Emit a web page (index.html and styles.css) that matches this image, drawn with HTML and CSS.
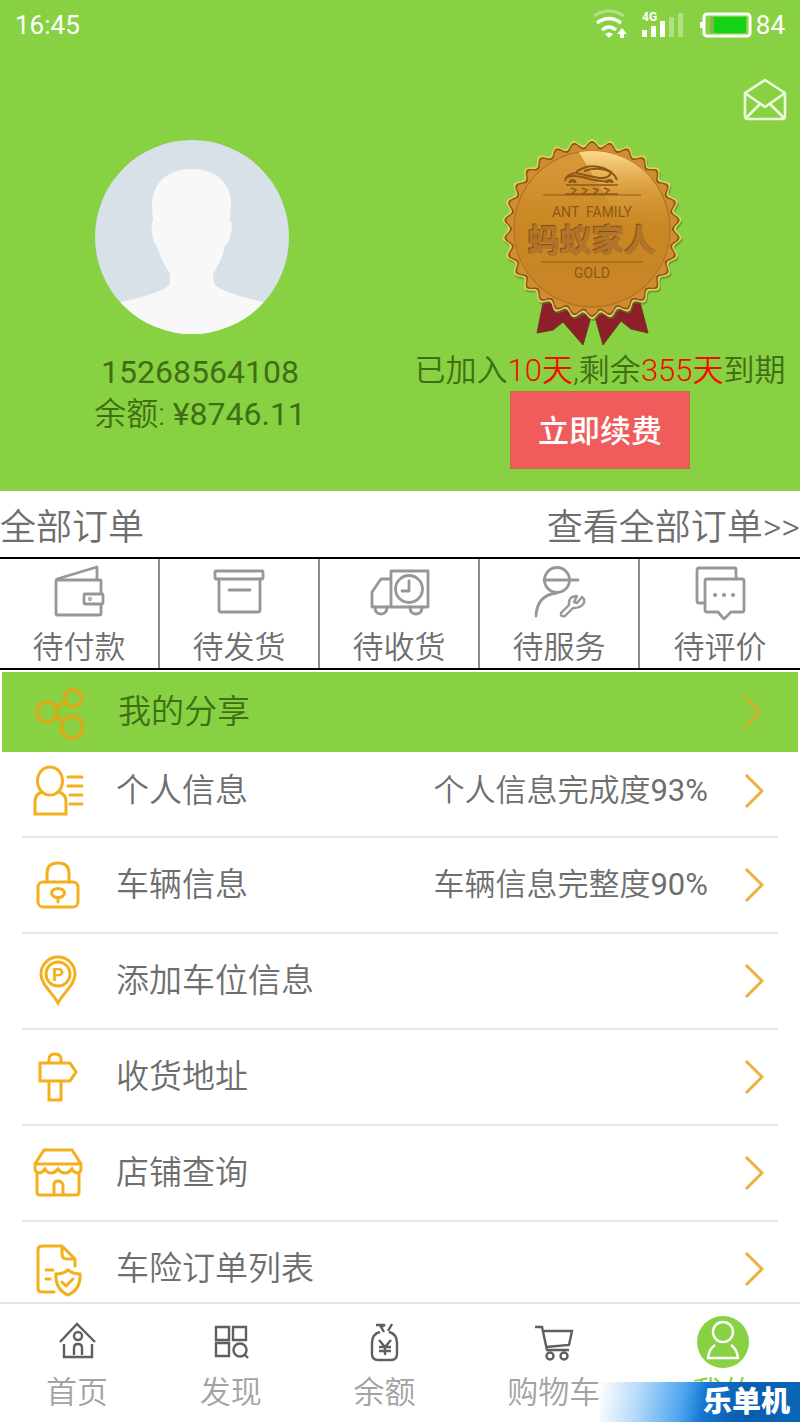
FILE: index.html
```html
<!DOCTYPE html>
<html lang="zh-CN">
<head>
<meta charset="utf-8">
<meta name="viewport" content="width=device-width, initial-scale=1">
<title>我的</title>
<link rel="stylesheet" href="styles.css">
</head>
<body>
<main class="content">
  <header class="profile">
    <div class="status">
      <span>16:45</span>
      <div class="status-right">
        <svg class="wifi" viewBox="0 0 36 32" fill="none" stroke="#fff" stroke-width="3">
          <path d="M3 7Q18-3 33 7" opacity=".35"/>
          <path d="M6 14Q18 5 30 14M11 21Q18 15 25 21" stroke-width="3.500"/>
          <path d="M14 25Q18 22 22 25L18 29Z" fill="#fff" stroke="none"/>
          <path d="M31 19l5 6h-3v4h-4v-4h-3z" fill="#fff" stroke="none"/>
        </svg>
        <svg class="signal" viewBox="0 0 42 32" fill="#fff">
          <text x="0" y="12" class="signal-type">4G</text>
          <path d="M0 21h5v7H0zM9 17h5v11H9zM18 12h5v16h-5z"/>
          <path d="M27 8h5v20h-5zM36 4h5v24h-5z" opacity=".35"/>
        </svg>
        <svg class="battery" viewBox="0 0 52 32">
          <rect x="4" y="5" width="46" height="22" rx="3" fill="none" stroke="#fff" stroke-width="3"/>
          <path d="M0 13h3v6H0z" fill="#fff"/>
          <path d="M10 8h4v16h-4z" fill="#7fb84a"/>
          <path d="M14 8h32v16H14z" fill="#14d214"/>
        </svg>
        <span>84</span>
      </div>
    </div>
    <div class="tools">
      <button class="mail" type="button" aria-label="消息">
        <svg viewBox="0 0 44 44" fill="none" stroke="#eefadd" stroke-width="2.6" stroke-linejoin="round">
          <path d="M2 15L22 2l20 13v23q0 3-3 3H5q-3 0-3-3z"/>
          <path d="M2 15l20 14 20-14M3 40l14-14M41 40L27 26"/>
        </svg>
      </button>
    </div>
    <div class="columns">
      <section class="column account">
        <svg class="avatar" viewBox="0 0 194 194">
          <defs><clipPath id="round"><circle cx="97" cy="97" r="97"/></clipPath></defs>
          <g clip-path="url(#round)">
            <path d="M0 0h194v194H0z" fill="#d8e0e8"/>
            <path d="M97 29C122 29 136 44 136 64L135 81Q138 82 136 93Q134 104 130 106C128 118 122 127 118 134L119 144Q126 152 168 162L194 180V194H0V180L26 162Q68 153 75 144V134C70 126 65 117 62 106Q58 103 57 92Q56 82 58 81L57 64C58 43 72 29 97 29Z" fill="#f8f8f8"/>
          </g>
        </svg>
        <p class="num">15268564108</p>
        <p>余额: <span class="num">¥8746.11</span></p>
      </section>
      <section class="column membership">
        <svg class="medal" viewBox="0 0 184 208">
          <defs>
            <linearGradient id="gold" x1="0" y1="0" x2="0" y2="1">
              <stop offset="0" stop-color="#d99a3c"/><stop offset=".5" stop-color="#c98622"/><stop offset="1" stop-color="#c98528"/>
            </linearGradient>
            <linearGradient id="shine" x1="0" y1="0" x2="0" y2="1">
              <stop offset="0" stop-color="#ffd98c"/><stop offset=".5" stop-color="#eab65a" stop-opacity=".3"/><stop offset="1" stop-color="#d9983a" stop-opacity="0"/>
            </linearGradient>
          </defs>
          <path d="M44 160L37 195l16-3 10-8 20 23 10-35 10 35 18-24 10 8 17 4-9-35z" fill="#8d1f2b" stroke="#6f3a1d"/>
          <path class="scallop" data-radius="87" transform="translate(1 2)" fill="#4f8a20" opacity=".6"/>
          <path class="scallop" data-radius="87" fill="#e6cf62"/>
          <path class="scallop" data-radius="85" fill="#8a5a14"/>
          <path class="scallop" data-radius="83" fill="#d08c32"/>
          <circle cx="92" cy="91" r="78" fill="url(#gold)" stroke="#a86d1c"/>
          <path d="M79 14A78 78 0 0 1 150 39Q168 60 168 91Q140 100 124 91Z" fill="url(#shine)"/>
          <g fill="none" stroke="#8d5815" stroke-width="1.6">
            <path d="M65 43Q66 36 76 35Q88 38 99 40Q110 41 111 34Q99 28 84 33" stroke-width="2"/>
            <path d="M76 34Q88 25 103 30Q114 34 117 42M65 40Q72 36 86 40T108 43" stroke-width="2"/>
            <path d="M66 47h52"/>
            <path d="M70 45a2 2 0 0 1 5 0M107 45a2 2 0 0 1 5 0" stroke-width="3"/>
            <path d="M65 56h53M71 50l5 2-4 4M82 50l5 2-4 4M93 50l5 2-4 4M104 50l5 2-4 4"/>
            <path d="M43 57h98M41 124h102" stroke-width="1"/>
          </g>
          <text class="medal-latin" x="92" y="79" xml:space="preserve">ANT  FAMILY</text>
          <text class="medal-name shadow" x="91" y="113">蚂蚁家人</text>
          <text class="medal-name" x="92" y="114">蚂蚁家人</text>
          <text class="medal-latin" x="92" y="140">GOLD</text>
        </svg>
        <p>已加入<em>10天</em>,剩余<em>355天</em>到期</p>
        <button class="renew" type="button">立即续费</button>
      </section>
    </div>
  </header>

  <section class="orders">
    <div class="orders-head">
      <h2>全部订单</h2>
      <a href="#orders">查看全部订单&gt;&gt;</a>
    </div>
    <div class="order-types">
      <a class="order-type" href="#pay">
        <svg viewBox="0 0 64 60"><rect x="9" y="16" width="45" height="35" rx="1"/><path d="M10 15L50 3v12"/><rect x="37" y="30" width="19" height="10" rx="1" fill="#fff"/><circle cx="43" cy="35" r=".6"/></svg>
        <span>待付款</span></a>
      <a class="order-type" href="#ship">
        <svg viewBox="0 0 64 60"><rect x="8" y="7" width="48" height="8" rx="1"/><path d="M12 15v31q0 2 2 2h37q2 0 2-2V15M22 26h21"/></svg>
        <span>待发货</span></a>
      <a class="order-type" href="#receive">
        <svg viewBox="0 0 64 60"><path d="M24 43V7h37v36H5V28l9-13h10"/><circle cx="42" cy="25" r="13.500"/><path d="M42 17v10h-7M8 43q0 7 6 7t6-7M43 43q0 7 6 7t6-7"/></svg>
        <span>待收货</span></a>
      <a class="order-type" href="#service">
        <svg viewBox="0 0 64 60"><circle cx="30" cy="16" r="12.500"/><path d="M17 16h34M9 52Q10 31 30 29"/><path d="M53 33l-5 6-3-1 3-6q-9 0-8 9l-8 8q-1 4 4 3l8-8q8 0 11-5 1-4-2-6z" stroke-width="2.400" transform="translate(2 0)"/></svg>
        <span>待服务</span></a>
      <a class="order-type" href="#review">
        <svg viewBox="0 0 64 60"><path d="M17 39h-6q-2 0-2-2V6q0-2 2-2h36q1 0 1 2v9"/><path d="M19 15h35q2 0 2 2v29q0 2-2 2H43l-7 7-6-7H19q-2 0-2-2V17q0-2 2-2z"/><path d="M27 31h.1M36 31h.1M45 31h.1" stroke-width="4"/></svg>
        <span>待评价</span></a>
    </div>
  </section>

  <a class="row share" href="#share">
    <svg class="row-icon" viewBox="0 0 60 60"><circle cx="19" cy="30" r="10"/><circle cx="45" cy="16" r="8.500"/><circle cx="44" cy="45" r="11"/><path d="M28 25l9-4M28 35l7 4"/></svg>
    <span class="row-title">我的分享</span>
    <svg class="chevron" viewBox="0 0 20 38"><path d="M2 3l16 16L2 35"/></svg>
  </a>
  <nav class="rows" aria-label="个人服务">
    <a class="row" href="#me">
      <svg class="row-icon" viewBox="0 0 60 60"><ellipse cx="22" cy="20" rx="12.500" ry="14"/><path d="M14 31q-7 2-7 10v12h31V41q0-8-7-10M40 16h14M40 25h14M42 34h12M42 43h12"/></svg>
      <span class="row-title">个人信息</span><span class="row-note">个人信息完成度<span class="num">93%</span></span>
      <svg class="chevron" viewBox="0 0 20 38"><path d="M2 3l16 16L2 35"/></svg>
    </a>
    <a class="row" href="#car">
      <svg class="row-icon" viewBox="0 0 60 60"><rect x="10" y="27" width="40" height="25" rx="5"/><path d="M19 27v-9q0-10 11-10t11 10v9M30 43v4"/><ellipse cx="30" cy="38" rx="6.500" ry="4.500"/></svg>
      <span class="row-title">车辆信息</span><span class="row-note">车辆信息完整度<span class="num">90%</span></span>
      <svg class="chevron" viewBox="0 0 20 38"><path d="M2 3l16 16L2 35"/></svg>
    </a>
    <a class="row" href="#parking">
      <svg class="row-icon" viewBox="0 0 60 60"><path d="M30 52C25 42 13 34 13 23a17 17 0 0 1 34 0C47 34 35 42 30 52z"/><circle cx="30" cy="23" r="12"/><text x="30" y="30" class="pin-letter">P</text></svg>
      <span class="row-title">添加车位信息</span>
      <svg class="chevron" viewBox="0 0 20 38"><path d="M2 3l16 16L2 35"/></svg>
    </a>
    <a class="row" href="#address">
      <svg class="row-icon" viewBox="0 0 60 60"><path d="M12 16h30l6 9-6 9H12zM21 16v-4q0-5 6-5t6 5v4M21 34v19h12V34"/></svg>
      <span class="row-title">收货地址</span>
      <svg class="chevron" viewBox="0 0 20 38"><path d="M2 3l16 16L2 35"/></svg>
    </a>
    <a class="row" href="#shops">
      <svg class="row-icon" viewBox="0 0 60 60"><path d="M16 7h28l9 14v5q0 3-3 4-4 0-6-4-3 4-7 4-4 0-7-4-3 4-7 4t-6-4q-3 4-6 4-4-1-4-4v-5zM7 21h46M9 30v19q0 3 3 3h36q3 0 3-3V30M26 52V42q0-4 4-4t5 4v10"/></svg>
      <span class="row-title">店铺查询</span>
      <svg class="chevron" viewBox="0 0 20 38"><path d="M2 3l16 16L2 35"/></svg>
    </a>
    <a class="row" href="#insurance">
      <svg class="row-icon" viewBox="0 0 60 60"><path d="M26 53H14q-4 0-4-4V11q0-4 4-4h20l13 13v7M34 7v8q0 5 5 5h8M18 31h7M18 40h4"/><path d="M40 31q5 4 12 4 1 15-12 21-13-6-12-21 7 0 12-4zM34 43l4 4 7-7"/></svg>
      <span class="row-title">车险订单列表</span>
      <svg class="chevron" viewBox="0 0 20 38"><path d="M2 3l16 16L2 35"/></svg>
    </a>
  </nav>
</main>

<nav class="tabs" aria-label="主导航">
  <a class="tab" href="#home">
    <svg viewBox="0 0 52 52"><path d="M9 26L26 8l18 18M13 28v13h28V28M23 39v-7q0-4 4-4t4 4v7"/><circle cx="27" cy="20" r="4"/></svg>
    <span>首页</span></a>
  <a class="tab" href="#discover">
    <svg viewBox="0 0 52 52"><path d="M11 11h13v13H11zM28 11h13v13H28zM11 27h13v13H11zM39 38l4 4"/><circle cx="35" cy="34" r="6.500"/></svg>
    <span>发现</span></a>
  <a class="tab" href="#balance">
    <svg viewBox="0 0 52 52"><path d="M18 9h9l-4 2 3 5M34 8l-4 7M22 16q-8 2-8 11v11q0 6 6 6h13q6 0 6-6V27q0-9-8-11M21 24l6 7 6-7M27 31v8M21 31h12M21 35h12"/></svg>
    <span>余额</span></a>
  <a class="tab" href="#cart">
    <svg viewBox="0 0 52 52"><path d="M7 11h7l5 23h22M15 15h29l-3 14-23 2"/><circle cx="22" cy="40" r="3.500"/><circle cx="36" cy="40" r="3.500"/></svg>
    <span>购物车</span></a>
  <a class="tab active" href="#mine" aria-current="page">
    <svg viewBox="0 0 52 52"><circle cx="26" cy="26" r="26" fill="#88d143" stroke="none"/><circle cx="26" cy="16" r="10"/><path d="M18 29q-6 4-7 13h30q-1-9-7-13"/></svg>
    <span>我的</span></a>
  <div class="stamp">乐单机</div>
</nav>
<script src="medal.js"></script>
</body>
</html>
```
FILE: medal.js
```js
// Builds the wavy rim of the medal: 30 waves round the centre.
document.querySelectorAll(".scallop").forEach(function (path) {
  var radius = Number(path.dataset.radius);
  var points = [];
  for (var i = 0; i < 720; i++) {
    var angle = (i * Math.PI) / 360;
    var r = radius + 3 * Math.cos(angle * 30);
    points.push((92 + r * Math.sin(angle)).toFixed(1) + " " + (91 - r * Math.cos(angle)).toFixed(1));
  }
  path.setAttribute("d", "M" + points.join("L") + "Z");
});
```
FILE: styles.css
```css
* { box-sizing: border-box; }

body {
  margin: 0;
  height: 100vh;
  display: flex;
  flex-direction: column;
  background: #fff;
  color: #6e6e6e;
  font-family: Roboto, "Noto Sans CJK SC", sans-serif;
  font-size: 31px;
  font-weight: 350;
}

a { color: inherit; text-decoration: none; }
p, h2 { margin: 0; font-weight: inherit; }
button { border: 0; padding: 0; font-family: inherit; cursor: pointer; }
svg { display: block; flex: none; }
.num { font-weight: 400; }

.content {
  flex: 1;
  min-height: 0;
  overflow-y: auto;
  scrollbar-width: none;
}

/* Profile header */
.profile {
  background: #88d143;
  color: #3f6f14;
  padding-bottom: 22px;
}

.status {
  display: flex;
  justify-content: space-between;
  align-items: center;
  height: 50px;
  padding: 0 15px;
  color: #fff;
  font-size: 26px;
  font-weight: 400;
}

.status-right { display: flex; align-items: center; }
.wifi { width: 36px; height: 32px; margin-right: 15px; }
.signal { width: 42px; height: 32px; margin-right: 16px; }
.signal-type { font-size: 12px; font-weight: 700; }
.battery { width: 52px; height: 32px; margin-right: 4px; }

.tools {
  display: flex;
  justify-content: flex-end;
  padding: 28px 13px 0;
}

.mail { background: none; }
.mail svg { width: 44px; height: 44px; }

.columns {
  display: grid;
  grid-template-columns: 1fr 1fr;
  padding-top: 16px;
}

.column {
  display: flex;
  flex-direction: column;
  align-items: center;
  white-space: nowrap;
}

.account { padding-top: 2px; font-size: 32px; line-height: 42px; }
.membership { line-height: 40px; }
.avatar { width: 194px; height: 194px; margin: 0 16px 17px 0; }
.medal { width: 184px; height: 208px; margin: 0 16px 5px 0; }
.column em { color: #f50a00; font-style: normal; }

.medal-latin { font-size: 14px; font-weight: 400; fill: #8d5815; text-anchor: middle; }
.medal-name { font-size: 32px; font-weight: 900; fill: #b0742a; text-anchor: middle; }
.medal-name.shadow { fill: #83500f; }

.renew {
  width: 180px;
  height: 78px;
  padding-bottom: 4px;
  background: #f05c5c;
  border: 1px solid #b9743c;
  color: #fff;
  font-size: 31px;
  font-weight: 500;
}

/* Orders */
.orders-head {
  display: flex;
  justify-content: space-between;
  align-items: center;
  height: 66px;
  font-size: 36px;
}

.orders-head h2 { font-size: 36px; }

.order-types {
  display: grid;
  grid-template-columns: repeat(5, 1fr);
  border-top: 2px solid #000;
  border-bottom: 2px solid #000;
}

.order-type {
  display: flex;
  flex-direction: column;
  align-items: center;
  gap: 4px;
  padding-top: 5px;
  line-height: 40px;
  border-right: 2px solid #8c8c8c;
}

.order-type:last-child { border-right: 0; }

.order-type svg {
  width: 64px;
  height: 60px;
  fill: none;
  stroke: #979797;
  stroke-width: 2.8;
  stroke-linejoin: round;
  stroke-linecap: round;
}

/* Service rows */
.row {
  display: flex;
  align-items: center;
  height: 96px;
  margin: 0 22px;
  padding: 0 14px 0 6px;
  border-bottom: 2px solid #e6e6e6;
  line-height: 44px;
}

.row.share {
  height: 80px;
  margin: 2px 2px 0;
  padding: 0 36px 0 26px;
  border: 0;
  background: #88d143;
  color: #3f6f14;
}

.rows .row:first-child { height: 86px; padding-bottom: 6px; }

.row-icon {
  width: 60px;
  height: 60px;
  margin-right: 28px;
  fill: none;
  stroke: #f3b01c;
  stroke-width: 3;
  stroke-linecap: round;
}

.share .row-icon { margin-right: 30px; stroke: #d4ad1e; stroke-width: 4; }
.pin-letter { font-size: 19px; font-weight: 700; fill: #f3b01c; stroke: none; text-anchor: middle; }
.row-title { flex: 1; font-size: 33px; }
.row-note { margin-right: 36px; }

.chevron {
  width: 20px;
  height: 38px;
  fill: none;
  stroke: #efae3d;
  stroke-width: 3;
}

.share .chevron { stroke: #d8ab2c; }

/* Bottom tabs */
.tabs {
  position: relative;
  display: flex;
  justify-content: space-around;
  padding: 12px 0 8px;
  border-top: 2px solid #e4e4e4;
  background: #fff;
  color: #a3a3a3;
}

.tab {
  display: flex;
  flex-direction: column;
  align-items: center;
  gap: 4px;
  line-height: 42px;
}

.tab svg {
  width: 52px;
  height: 52px;
  fill: none;
  stroke: #5f5f5f;
  stroke-width: 2.4;
}

.tab.active { color: #88d143; }
.tab.active svg { stroke: #fff; }

/* Corner stamp over the tab bar */
.stamp {
  position: absolute;
  right: 0;
  bottom: 0;
  width: 200px;
  padding-right: 10px;
  background: linear-gradient(100deg, rgba(255, 255, 255, 0) 0%, #b4d9fa 20%, #4aa3f0 42%, #1576cf 52%, #0a5cae 72%, #0868b8 100%);
  color: #fff;
  font-size: 29px;
  font-weight: 900;
  line-height: 40px;
  text-align: right;
}
```
